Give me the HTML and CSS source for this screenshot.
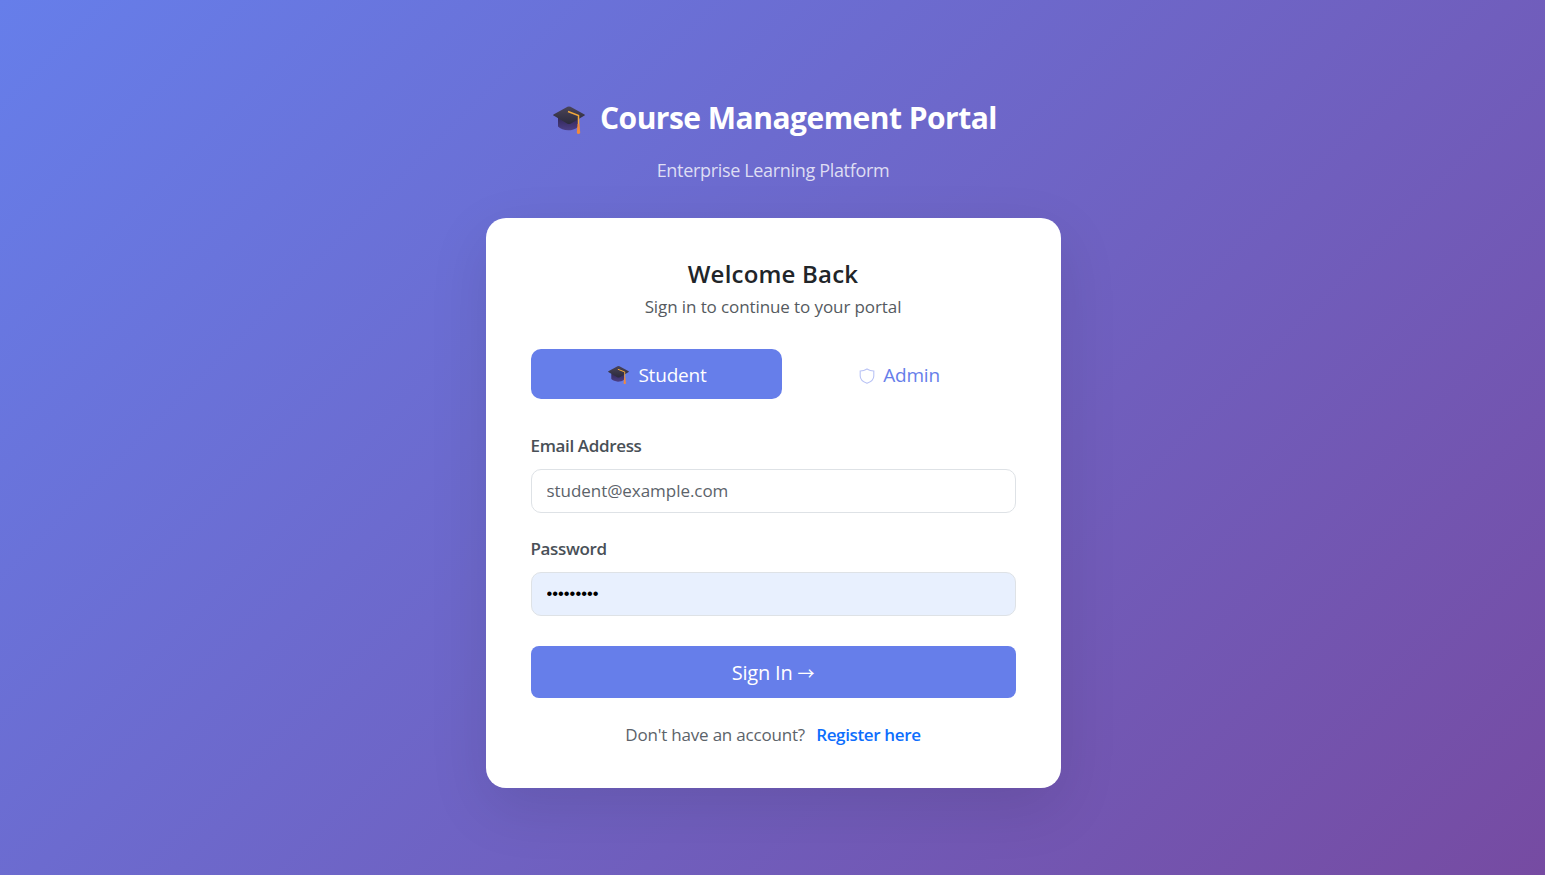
FILE: index.html
```html
<!DOCTYPE html>
<html lang="en">
<head>
<meta charset="utf-8">
<title>Course Management Portal</title>
<link rel="stylesheet" href="styles.css">
</head>
<body>
<svg class="sprite" width="0" height="0" aria-hidden="true">
  <defs>
    <linearGradient id="capTop" x1="0" y1="0" x2="0" y2="1"><stop offset="0" stop-color="#4a4458"/><stop offset="1" stop-color="#2b2a3d"/></linearGradient>
    <linearGradient id="capBase" x1="0" y1="0" x2="0" y2="1"><stop offset="0" stop-color="#33285a"/><stop offset="1" stop-color="#4c3f86"/></linearGradient>
    <symbol id="cap" viewBox="0 0 32 32">
      <path d="M5 13v8.500c4 4.500 14 5.500 20 .5v-9z" fill="url(#capBase)"/>
      <path d="M0.500 9.500 14.500 1.800q1.500-.6 3 0L31.500 9.500q.6.500 0 1L18 18.500q-2 1-4 0L.5 10.500q-.6-.5 0-1z" fill="url(#capTop)"/>
      <path d="M15 6.500 25.500 10.500v9" fill="none" stroke="#f2a93b" stroke-width="1.500"/>
      <path d="M24.500 19h2l.7 9q-1.700 2-3.400 0z" fill="#f28a3c"/>
    </symbol>
  </defs>
</svg>
<main class="page">
  <header class="brand">
    <h1 class="brand-title"><svg class="cap-large"><use href="#cap"/></svg><span>Course Management Portal</span></h1>
    <p class="brand-sub">Enterprise Learning Platform</p>
  </header>
  <section class="card">
    <h2 class="card-title">Welcome Back</h2>
    <p class="card-sub">Sign in to continue to your portal</p>
    <div class="tabs">
      <button class="tab tab-active" type="button"><svg class="cap-small"><use href="#cap"/></svg>Student</button>
      <button class="tab tab-plain" type="button">
        <svg class="shield" viewBox="0 0 16 16"><path d="M8 1 C10 2.300 12.500 3 14.800 3 V8 C14.800 11.500 11.500 14 8 15.300 C4.500 14 1.200 11.500 1.200 8 V3 C3.500 3 6 2.300 8 1 Z" fill="none" stroke="#b9c3f5" stroke-width="1.100"/></svg>Admin</button>
    </div>
    <form class="form">
      <label class="label" for="email">Email Address</label>
      <input class="input" id="email" type="email" placeholder="student@example.com">
      <label class="label label-second" for="password">Password</label>
      <input class="input input-filled" id="password" type="password" value="password1">
      <button class="submit" type="button">Sign In <span class="arrow">→</span></button>
    </form>
    <p class="foot">Don't have an account? <a class="foot-link" href="#">Register here</a></p>
  </section>
</main>
</body>
</html>
```
FILE: styles.css
```css
* { box-sizing: border-box; }
html, body { height: 100%; }
body {
  margin: 0;
  min-height: 875px;
  background: linear-gradient(135deg, #667eea 0%, #764ba2 100%);
  font-family: "Open Sans", "Noto Sans", sans-serif;
  overflow: hidden;
}
.sprite { position: absolute; }
.page { display: flex; flex-direction: column; align-items: center; padding: 97px 0 0 1px; }
.brand { text-align: center; color: #fff; height: 121px; }
.brand-title {
  margin: 0;
  height: 42px;
  display: flex;
  align-items: center;
  gap: 15px;
  font-size: 30px;
  line-height: 42px;
  font-weight: 700;
  letter-spacing: -0.52px;
  position: relative;
  left: 2px;
}
.cap-large { width: 32px; height: 32px; position: relative; top: 3px; }
.brand-sub { margin: 19px 0 0; font-size: 18px; line-height: 25px; letter-spacing: -0.33px; color: rgba(255,255,255,.78); }
.card {
  width: 575px;
  height: 570px;
  background: #fff;
  border-radius: 20px;
  padding: 39px 45px;
  box-shadow: 0 20px 60px rgba(0,0,0,.1);
}
.card-title { margin: 0; text-align: center; font-size: 24px; line-height: 33px; font-weight: 600; color: #212529; letter-spacing: 0.2px; }
.card-sub { margin: 6px 0 0; text-align: center; font-size: 17px; line-height: 22px; color: #555a60; letter-spacing: -0.1px; }
.tabs { display: flex; margin-top: 31px; }
.tab {
  height: 50px;
  border: 0;
  background: transparent;
  border-radius: 10px;
  font: inherit;
  font-size: 19px;
  color: #667eea;
  display: flex;
  align-items: center;
  justify-content: center;
  gap: 8px;
  letter-spacing: -0.2px;
  padding: 2px 0 0;
}
.tab-plain { flex: 0 0 234px; padding-left: 2px; }
.tab-active { flex: 0 0 251px; padding-left: 3px; background: #667eea; color: #fff; gap: 9px; }
.cap-small { width: 21px; height: 21px; }
.shield { width: 16px; height: 16px; position: relative; top: 1px; }
.form { display: flex; flex-direction: column; margin-top: 35px; }
.label { font-size: 17px; line-height: 23px; font-weight: 600; color: #495057; letter-spacing: -0.35px; }
.label-second { margin-top: 24px; }
.input {
  margin-top: 12px;
  height: 44px;
  width: 100%;
  border: 1px solid #dee2e6;
  border-radius: 10px;
  padding: 0 15px 2px;
  font: inherit;
  font-size: 17px;
  color: #212529;
  background: #fff;
  letter-spacing: -0.05px;
}
.input::placeholder { color: #5c636a; opacity: 1; }
.input-filled { background: #e8f0fe; color: #000; font-family: "Liberation Sans", sans-serif; font-size: 16.500px; letter-spacing: 0; padding-bottom: 1px; }
.submit {
  margin-top: 30px;
  height: 52px;
  border: 0;
  border-radius: 8px;
  background: #667eea;
  color: #fff;
  font: inherit;
  font-size: 20px;
  letter-spacing: -0.2px;
}
.arrow { font-family: "Noto Sans CJK JP", sans-serif; font-size: 17px; }
.foot { margin: 25px 0 0; text-align: center; font-size: 17px; line-height: 23px; color: #5c636a; letter-spacing: -0.2px; }
.foot-link { margin-left: 7px; color: #0d6efd; font-weight: 600; text-decoration: none; letter-spacing: -0.35px; }
```
